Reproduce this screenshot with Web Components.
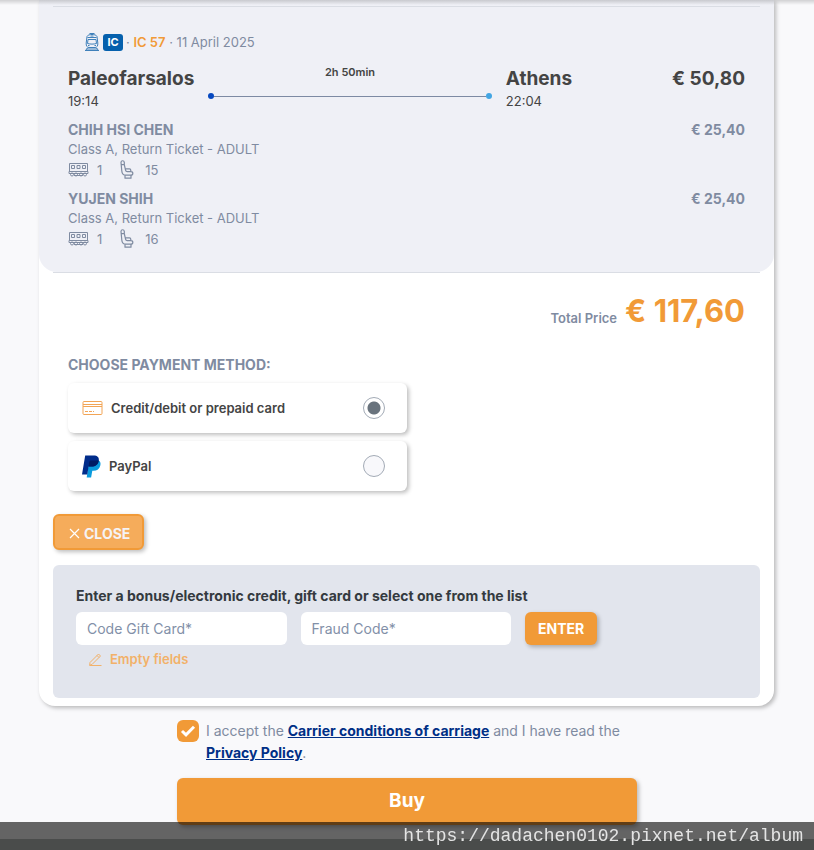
<!DOCTYPE html>
<html lang="en">
<head>
<meta charset="utf-8">
<meta name="viewport" content="width=device-width, initial-scale=1">
<title>Payment</title>
<style>
  html {
    --orange: #f19a37;
    --muted: #7f8ba1;
    --dark: #444444;
    --panel: #eff0f6;
    --rule: #dadde4;
    --shadow: 2px 2px 4px rgba(0, 0, 0, .26);
  }
  body {
    margin: 0;
    font-family: Inter, "Liberation Sans", sans-serif;
    font-size: 14px;
    color: var(--muted);
    background: #f9f9fb;
  }
</style>
</head>
<body>
<checkout-page>
  <booking-card>
    <ticket-panel slot="ticket">
      <train-badge type="IC" number="IC 57" date="11 April 2025"></train-badge>
      <journey-row from="Paleofarsalos" depart="19:14" to="Athens" arrive="22:04" duration="2h 50min" price="€ 50,80"></journey-row>
      <passenger-row name="CHIH HSI CHEN" fare="Class A, Return Ticket - ADULT" coach="1" seat="15" price="€ 25,40"></passenger-row>
      <passenger-row name="YUJEN SHIH" fare="Class A, Return Ticket - ADULT" coach="1" seat="16" price="€ 25,40"></passenger-row>
    </ticket-panel>
    <total-price amount="€ 117,60">Total Price</total-price>
    <payment-methods></payment-methods>
    <close-button>CLOSE</close-button>
    <gift-form></gift-form>
  </booking-card>
  <accept-terms></accept-terms>
  <buy-button>Buy</buy-button>
</checkout-page>
<url-bar>https://dadachen0102.pixnet.net/album</url-bar>

<script>
const define = (tag, render) => customElements.define(tag, class extends HTMLElement {
  constructor() {
    super();
    this.attachShadow({ mode: 'open' });
  }
  connectedCallback() {
    this.shadowRoot.innerHTML = '<style>*{box-sizing:border-box}:host{display:block;box-sizing:border-box}</style>' +
      render(name => this.getAttribute(name));
  }
});

define('checkout-page', () => `
  <style>
    :host { display: flex; flex-direction: column; min-height: 100vh; }
    .top { position: absolute; top: 0; left: 0; right: 0; height: 5px;
      background: linear-gradient(rgba(0,0,0,.16), rgba(0,0,0,0)); }
    footer { flex: 1; min-height: 11px; margin-top: 14px; background: #b9bebb; }
  </style>
  <div class="top"></div>
  <slot></slot>
  <footer></footer>`);

define('booking-card', () => `
  <style>
    :host { margin: 0 40px 0 39px; padding-bottom: 8px; background: #fff;
      border-radius: 0 0 16px 16px; box-shadow: var(--shadow); }
    .body { padding: 0 14px; }
    .line { height: 1px; background: var(--rule); }
  </style>
  <slot name="ticket"></slot>
  <div class="body">
    <div class="line"></div>
    <slot></slot>
  </div>`);

define('ticket-panel', () => `
  <style>
    :host { background: var(--panel); border-radius: 0 0 18px 18px; padding: 6px 14px 22px; }
    .line { height: 1px; background: var(--rule); }
    .rows { padding: 25px 15px 0; }
  </style>
  <div class="line"></div>
  <div class="rows"><slot></slot></div>`);

define('train-badge', a => `
  <style>
    :host { display: flex; align-items: center; gap: 3px; height: 20px; padding-left: 16px; font-size: 13px; }
    svg { display: block; }
    .tag { background: #0560ad; color: #fff; font-weight: 700; border-radius: 3px; width: 20px;
      line-height: 17px; text-align: center; font-size: 11px; }
    b { color: var(--orange); font-weight: 600; }
  </style>
  <svg width="16" height="20" viewBox="0 0 16 20" fill="none" stroke="#3f80ba">
    <path d="M5.500 1.500h5M3 4.500C4 1.800 12 1.800 13 4.500l.8 6.500c.2 3-.8 4.500-2.800 4.500H5c-2 0-3-1.500-2.800-4.500zM3.500 5.500h9M4 7.500h8l.5 4c-3 .8-6 .8-9 0zM6.500 4h3M4 13.500h1.500M10.500 13.500H12M5 15.500h6M3.500 16l-2 2.500M12.500 16l2 2.500M1 18.500h14M2.500 17h11"/>
  </svg>
  <span class="tag">${a('type')}</span>
  <span>· <b>${a('number')}</b> · ${a('date')}</span>`);

define('journey-row', a => `
  <style>
    :host { display: grid; grid-template-columns: auto 32fr 27fr; column-gap: 14px; padding: 14px 0 1px; color: var(--dark); }
    .place { font-size: 19px; line-height: 25px; font-weight: 700; }
    .time { font-size: 13px; line-height: 20px; }
    .end { display: flex; justify-content: space-between; }
    .track { text-align: center; font-size: 11px; line-height: 12px; font-weight: 600; }
    .bar { display: flex; align-items: center; height: 6px; margin-top: 15px; }
    .bar i { width: 6px; height: 6px; border-radius: 50%; background: #0648c0; }
    .bar i:last-child { background: #43a5e3; }
    .bar span { flex: 1; height: 1px; background: #7d8aa3; }
  </style>
  <div><div class="place">${a('from')}</div><div class="time">${a('depart')}</div></div>
  <div class="track">${a('duration')}<div class="bar"><i></i><span></span><i></i></div></div>
  <div class="end">
    <div><div class="place">${a('to')}</div><div class="time">${a('arrive')}</div></div>
    <div class="place">${a('price')}</div>
  </div>`);

define('passenger-row', a => `
  <style>
    :host { display: flex; justify-content: space-between; padding-top: 8px; font-size: 13px; line-height: 18px; }
    .bold { font-size: 14px; line-height: 20px; font-weight: 700; }
    .seat { display: flex; align-items: center; height: 23px; }
    .seat span { margin: 0 18px 0 8px; }
    .seat svg + span + svg + span { margin: 0 0 0 11px; }
    svg { display: block; fill: none; stroke: var(--muted); }
  </style>
  <div>
    <div class="bold">${a('name')}</div>
    <div>${a('fare')}</div>
    <div class="seat">
      <svg width="21" height="16" viewBox="0 0 21 16"><path d="M1.500 1.500h18v8h-18zM3.500 3.500h3v3h-3zM9 3.500h3v3H9zM14.500 3.500h3v3h-3zM1 9.500h19v2H1zM6 13.500h9"/><circle cx="4" cy="12.500" r="1.500"/><circle cx="8" cy="12.500" r="1.500"/><circle cx="13" cy="12.500" r="1.500"/><circle cx="17" cy="12.500" r="1.500"/></svg>
      <span>${a('coach')}</span>
      <svg width="14" height="19" viewBox="0 0 14 19" stroke-width="1.200" stroke-linejoin="round"><path d="M1 2.300C1.200.3 4 .2 4.300 2.300V4.700H1.200zM1.200 4.700l.6 6.300c.2 3 1.400 4.200 4 4.200h5c2.700 0 2.700-3.500 0-3.500H7.200c-1 0-1.400-.4-1.600-1.300L4.300 4.700M5.300 8.800h4.200c1.700 0 1.700 2.900.3 2.900M5 15.300v2.900h6v-2.900"/></svg>
      <span>${a('seat')}</span>
    </div>
  </div>
  <div class="bold">${a('price')}</div>`);

define('total-price', a => `
  <style>
    :host { display: flex; justify-content: flex-end; align-items: flex-end; gap: 8px;
      padding: 18px 15px 24px; font-size: 13px; font-weight: 600; line-height: 26px; }
    strong { font-size: 31px; line-height: 40px; font-weight: 700; color: var(--orange); }
  </style>
  <slot></slot><strong>${a('amount')}</strong>`);

define('payment-methods', () => `
  <style>
    fieldset { border: 0; margin: 0; padding: 0 15px; display: grid; gap: 8px; }
    legend { padding: 0 0 8px; line-height: 20px; font-weight: 700; }
    label { display: flex; align-items: center; width: 50%; min-width: 300px; height: 50px; padding: 0 22px 0 14px;
      border-radius: 6px; background: #fff; box-shadow: var(--shadow); color: var(--dark); font-size: 13px; font-weight: 600; }
    label span { flex: 1; padding-left: 8px; }
    svg { display: block; }
    input { appearance: none; margin: 0; width: 22px; height: 22px; border: 1px solid #a3abb6; border-radius: 50%; background: #f8f8fb; }
    input:checked { background: radial-gradient(circle, #69737d 6px, #fff 7px); }
  </style>
  <fieldset>
    <legend>CHOOSE PAYMENT METHOD:</legend>
    <label>
      <svg width="21" height="16" viewBox="0 0 21 16" fill="none" stroke="#f2a556"><rect x="1" y="1.500" width="19" height="13" rx="1"/><path d="M1 4.500h19M1 6.500h19M3 11.500h3M7 11.500h3M11 11.500h1"/></svg>
      <span>Credit/debit or prepaid card</span><input type="radio" name="method" checked>
    </label>
    <label>
      <svg width="19" height="23" viewBox="0 0 19 23">
        <path fill="#0a9bdd" d="M16.800 5.500c1.800 1.200 2 3 1.500 5-.8 3.600-3.300 5.200-6.800 5.200h-1.200l-1.200 6.800H4.700L6.500 10z"/>
        <path fill="#002c8a" d="M3.200.5h8.300c4 0 5.800 2 5.300 5-.7 4-3.300 6-7.300 6H6.600l-1.300 8H0z"/>
        <path fill="#001c64" d="M16.800 5.500c-.7 4-3.300 6-7.300 6H6.600l.6-4.200c.2-1.200.8-1.800 2-1.800z"/>
      </svg>
      <span>PayPal</span><input type="radio" name="method">
    </label>
  </fieldset>`);

define('close-button', () => `
  <style>
    :host { padding: 23px 0 15px; }
    button { display: flex; align-items: center; gap: 4px; height: 36px; padding: 2px 12px 0 14px; font: inherit;
      font-weight: 700; color: #f5f3f5; background: #f5ac5b; border: 2px solid var(--orange); border-radius: 6px; box-shadow: var(--shadow); }
  </style>
  <button type="button"><svg width="11" height="11" viewBox="0 0 11 11" fill="none" stroke="#fff" stroke-width="1.200"><path d="M1 1l9 9M10 1l-9 9"/></svg><slot></slot></button>`);

define('gift-form', () => `
  <style>
    form { background: #e2e5ed; border-radius: 6px; padding: 21px 23px 27px; }
    .title { color: #343a40; font-weight: 700; line-height: 20px; padding-bottom: 6px; }
    .row { display: flex; gap: 14px; }
    input { width: calc(32% - 1px); height: 33px; border: 0; border-radius: 6px; padding: 0 11px; font: inherit; background: #fff; }
    input::placeholder { color: #8290a8; opacity: 1; }
    button { height: 33px; padding: 0 13px; border: 0; border-radius: 6px; font: inherit; font-weight: 700; color: #fff;
      background: var(--orange); box-shadow: var(--shadow); }
    .note { display: flex; align-items: center; gap: 8px; height: 26px; padding: 2px 0 0 13px; font-size: 13px; font-weight: 600; color: #f2b169; }
  </style>
  <form>
    <div class="title">Enter a bonus/electronic credit, gift card or select one from the list</div>
    <div class="row">
      <input type="text" placeholder="Code Gift Card*" aria-label="Code Gift Card">
      <input type="text" placeholder="Fraud Code*" aria-label="Fraud Code">
      <button type="button">ENTER</button>
    </div>
    <div class="note">
      <svg width="13" height="13" viewBox="0 0 13 13" fill="none" stroke="#f2b169"><path d="M1 9.500L9.500 1l2 2L3 11.500l-2.300.7zM8 2.500l2 2M.5 12.500h12"/></svg>
      Empty fields
    </div>
  </form>`);

define('accept-terms', () => `
  <style>
    :host { width: 100%; max-width: 460px; margin: 14px auto 0; }
    .row { display: flex; gap: 7px; line-height: 22px; }
    input { appearance: none; margin: 0; width: 22px; height: 22px; border-radius: 6px; background: var(--orange);
      grid-area: 1 / 1; }
    .box { display: grid; place-items: center; height: 22px; }
    svg { grid-area: 1 / 1; pointer-events: none; z-index: 1; }
    a { color: #002f86; font-weight: 700; text-decoration: underline; }
  </style>
  <div class="row">
    <div class="box"><input type="checkbox" id="terms" checked>
      <svg width="16" height="12" viewBox="0 0 16 12" fill="none" stroke="#fff" stroke-width="3"><path d="M2 6l4 3.800L14 1.800"/></svg></div>
    <label for="terms">I accept the <a href="#conditions">Carrier conditions of carriage</a> and I have read the <a href="#privacy">Privacy Policy</a>.</label>
  </div>`);

define('buy-button', () => `
  <style>
    :host { width: 100%; max-width: 460px; margin: 14px auto 0; }
    button { display: block; width: 100%; height: 47px; padding: 0 0 2px; border: 0; border-radius: 6px; font: inherit; font-size: 19px;
      font-weight: 700; color: #fff; background: var(--orange); box-shadow: var(--shadow); }
  </style>
  <button type="button"><slot></slot></button>`);

define('url-bar', () => `
  <style>
    :host { position: fixed; left: 0; right: 0; bottom: 0; height: 28px; padding-right: 11px; text-align: right;
      line-height: 28px; background: rgba(0, 0, 0, .6); color: #e4e4e4;
      font-family: "Courier New", "Liberation Mono", monospace; font-size: 18px; }
  </style>
  <slot></slot>`);
</script>
</body>
</html>
